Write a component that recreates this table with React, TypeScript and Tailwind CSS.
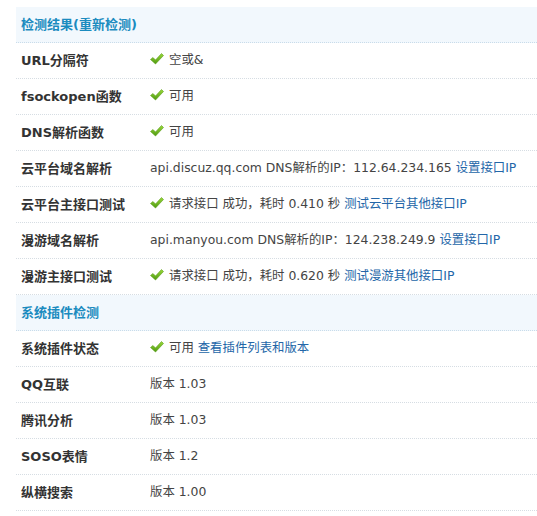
import React from "react";

const Check = () => (
  <svg width="14" height="12" viewBox="0 0 14 12" className="inline-block mr-[5px] align-[-1px]">
    <defs>
      <linearGradient id="g" x1="0" y1="0" x2="0" y2="1">
        <stop offset="0" stopColor="#9ad83a" />
        <stop offset="1" stopColor="#4e9a10" />
      </linearGradient>
    </defs>
    <path d="M0.5 6.5 L3 4.5 L5.5 7 L11.5 0.5 L13.5 2.5 L5.5 11 Z" fill="url(#g)" stroke="#5a9e1a" strokeWidth="0.6" />
  </svg>
);

const Link = ({ children }: { children: React.ReactNode }) => (
  <span className="text-[#2366a8]">{children}</span>
);

type Row = { label: string; value: React.ReactNode } | { header: string };

const rows: Row[] = [
  { header: "检测结果(重新检测)" },
  { label: "URL分隔符", value: <><Check />空或&amp;</> },
  { label: "fsockopen函数", value: <><Check />可用</> },
  { label: "DNS解析函数", value: <><Check />可用</> },
  { label: "云平台域名解析", value: <>api.discuz.qq.com DNS解析的IP：112.64.234.165 <Link>设置接口IP</Link></> },
  { label: "云平台主接口测试", value: <><Check />请求接口 成功，耗时 0.410 秒 <Link>测试云平台其他接口IP</Link></> },
  { label: "漫游域名解析", value: <>api.manyou.com DNS解析的IP：124.238.249.9 <Link>设置接口IP</Link></> },
  { label: "漫游主接口测试", value: <><Check />请求接口 成功，耗时 0.620 秒 <Link>测试漫游其他接口IP</Link></> },
  { header: "系统插件检测" },
  { label: "系统插件状态", value: <><Check />可用 <Link>查看插件列表和版本</Link></> },
  { label: "QQ互联", value: <>版本 1.03</> },
  { label: "腾讯分析", value: <>版本 1.03</> },
  { label: "SOSO表情", value: <>版本 1.2</> },
  { label: "纵横搜索", value: <>版本 1.00</> },
];

export default function App() {
  return (
    <div
      className="w-[537px] h-[516px] bg-white pt-[7px] pl-[16px] overflow-hidden"
      style={{ fontFamily: '"DejaVu Sans", "Noto Sans CJK SC", sans-serif' }}
    >
      <div className="flex flex-col">
        {rows.map((r, i) =>
          "header" in r ? (
            <div
              key={i}
              className="h-[36px] flex items-center pl-[5px] bg-[#f2f8fd] border-b border-dotted border-[#c9dcea] text-[13px] font-bold text-[#1b8bbf]"
            >
              {r.header}
            </div>
          ) : (
            <div
              key={i}
              className="h-[36px] flex items-center border-b border-dotted border-[#d6dde3] text-[12.4px] text-[#444] whitespace-nowrap"
            >
              <div className="w-[134px] shrink-0 pl-[5px] font-bold text-[13px] text-[#333]">{r.label}</div>
              <div className="block">{r.value}</div>
            </div>
          )
        )}
      </div>
    </div>
  );
}
